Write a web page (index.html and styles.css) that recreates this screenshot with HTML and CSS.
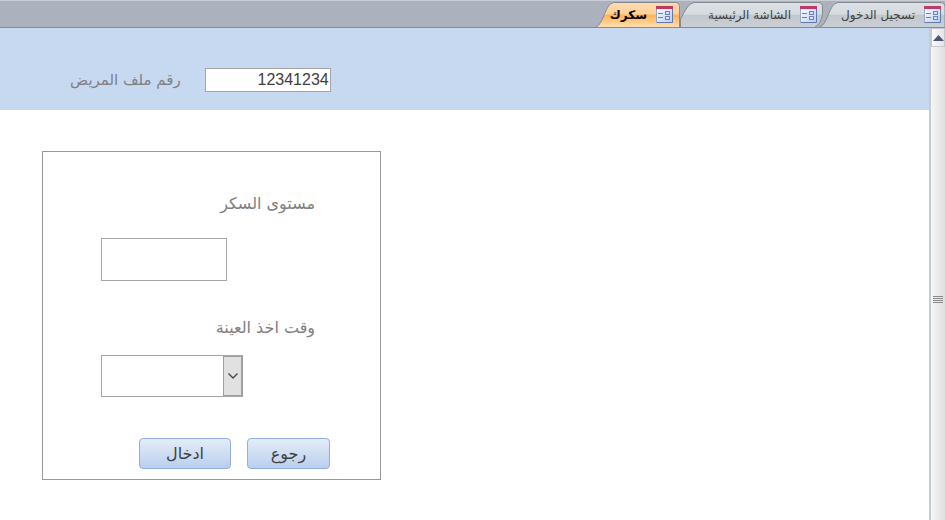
FILE: index.html
```
<!DOCTYPE html>
<html lang="ar" dir="rtl">
<head>
    <meta charset="utf-8">
    <title>سكرك</title>
    <link rel="stylesheet" href="styles.css">
</head>
<body>
    <!-- gradients and form icon shared by all tabs -->
    <svg class="defs" width="0" height="0" aria-hidden="true">
        <defs>
            <linearGradient id="tabGray" x1="0" y1="0" x2="0" y2="1">
                <stop offset="0" stop-color="#dde1e6"/>
                <stop offset="0.48" stop-color="#d5dade"/>
                <stop offset="0.52" stop-color="#c1c7cd"/>
                <stop offset="1" stop-color="#cbd0d6"/>
            </linearGradient>
            <linearGradient id="tabOrange" x1="0" y1="0" x2="0" y2="1">
                <stop offset="0" stop-color="#ffdcb0"/>
                <stop offset="0.45" stop-color="#ffd09a"/>
                <stop offset="0.52" stop-color="#ffb358"/>
                <stop offset="1" stop-color="#ffdfae"/>
            </linearGradient>
            <linearGradient id="iconBg" x1="0" y1="0" x2="1" y2="1">
                <stop offset="0" stop-color="#ffffff"/>
                <stop offset="1" stop-color="#b9cdee"/>
            </linearGradient>
            <symbol id="formIcon" viewBox="0 0 17 17">
                <rect x="0.5" y="1" width="16" height="15.5" fill="url(#iconBg)" stroke="#98a9cb"/>
                <rect x="0" y="0" width="17" height="3" fill="#bd3b66"/>
                <path d="M16.5 3v13.5H1" fill="none" stroke="#6079ae"/>
                <path d="M2 7.5h5M2 11.5h5" stroke="#7080aa"/>
                <rect x="9.5" y="5.5" width="4" height="3" fill="#d5e0f4" stroke="#6f84b8"/>
                <rect x="9.5" y="10.5" width="4" height="3" fill="#d5e0f4" stroke="#6f84b8"/>
            </symbol>
        </defs>
    </svg>

    <nav class="tabs">
        <a class="tab tab-first" href="#login">
            <svg class="tab-shape" viewBox="0 0 122 25" preserveAspectRatio="none"><path d="M-3 25C5 22 6 1 15 .5H117Q122 .5 122 5V25" fill="url(#tabGray)" stroke="#858b94"/></svg>
            <svg class="tab-icon"><use href="#formIcon"/></svg>
            <span>تسجيل الدخول</span>
        </a>
        <a class="tab tab-second" href="#home">
            <svg class="tab-shape" viewBox="0 0 143 25" preserveAspectRatio="none"><path d="M.5 25V17C5 9 8 1 15 .5H138Q142.500 .5 142.500 5V12Q141 22 135 25" fill="url(#tabGray)" stroke="#858b94"/></svg>
            <svg class="tab-icon"><use href="#formIcon"/></svg>
            <span>الشاشة الرئيسية</span>
        </a>
        <a class="tab tab-active" href="#sugar">
            <svg class="tab-shape" viewBox="0 0 84 25" preserveAspectRatio="none"><path d="M0 25C8 22 9 1 18 .5H79Q83.500 .5 83.500 5V25" fill="url(#tabOrange)" stroke="#858b94"/></svg>
            <svg class="tab-icon"><use href="#formIcon"/></svg>
            <span>سكرك</span>
        </a>
    </nav>

    <div class="window">
        <div class="scrollbar">
            <button class="scroll-up" type="button" aria-label="أعلى">
                <svg width="11" height="6" viewBox="0 0 11 6"><path d="M5.500 0L11 6H0z" fill="#4c5673"/></svg>
            </button>
            <div class="scroll-thumb">
                <svg width="10" height="8" viewBox="0 0 10 8"><path d="M0 .5h10M0 2.500h10M0 4.500h10M0 6.500h10" stroke="#8a8a8a"/></svg>
            </div>
        </div>

        <form class="form">
            <div class="file-row">
                <input class="box file-number" id="fileNumber" type="text" value="12341234" dir="ltr">
                <label for="fileNumber">رقم ملف المريض</label>
            </div>

            <div class="panel">
                <label class="field-label" for="sugarLevel">مستوى السكر</label>
                <input class="box sugar-level" id="sugarLevel" type="text">

                <label class="field-label" for="sampleTime">وقت اخذ العينة</label>
                <div class="combo">
                    <select class="box" id="sampleTime"><option></option></select>
                    <span class="combo-arrow">
                        <svg width="10" height="6" viewBox="0 0 10 6"><path d="M.5 .5L5 5L9.500 .5" fill="none" stroke="#444" stroke-width="1.300"/></svg>
                    </span>
                </div>

                <div class="buttons">
                    <button class="btn btn-back" type="button">رجوع</button>
                    <button class="btn btn-save" type="button">ادخال</button>
                </div>
            </div>
        </form>
    </div>
</body>
</html>
```

FILE: styles.css
```
* {
    box-sizing: border-box;
}

body {
    margin: 0;
    min-height: 100vh;
    display: flex;
    flex-direction: column;
    font-family: "DejaVu Sans", sans-serif;
    font-size: 15px;
    color: #808080;
    background: #fff;
}

.defs {
    position: absolute;
}

/* Tabs */
.tabs {
    display: flex;
    height: 28px;
    padding-top: 1px;
    background: #abb2bd;
    border-top: 1px solid #c9ced4;
    border-bottom: 1px solid #858b94;
}

.tab {
    position: relative;
    display: flex;
    align-items: center;
    gap: 9px;
    height: 25px;
    padding-right: 4px;
    font-size: 12px;
    color: #404040;
    text-decoration: none;
    white-space: nowrap;
}

.tab span,
.tab-icon {
    position: relative;
}

.tab-shape {
    position: absolute;
    top: 0;
    left: 0;
    width: 100%;
    height: 100%;
    overflow: visible;
}

.tab-icon {
    width: 17px;
    height: 17px;
}

.tab-first {
    width: 122px;
}

.tab-second {
    width: 143px;
    padding-right: 6px;
}

.tab-active {
    width: 84px;
    padding-right: 7px;
    font-weight: bold;
    color: #000;
}

/* Scrollbar */
.window {
    flex: 1;
    display: flex;
}

.scrollbar {
    width: 16px;
    display: flex;
    flex-direction: column;
    border-left: 2px solid #c5cbd2;
    background: #eee;
}

.scroll-up {
    height: 19px;
    padding: 0;
    border: 1px solid #c5c8cc;
    background: linear-gradient(to right, #fafafa, #e4e4e4);
    display: flex;
    align-items: center;
    justify-content: center;
}

.scroll-thumb {
    flex: 1;
    display: flex;
    align-items: center;
    justify-content: center;
    padding-top: 33px;
    background: linear-gradient(to right, #f6f6f6, #dedede);
}

/* Form */
.form {
    flex: 1;
    direction: ltr;
}

.file-row {
    display: flex;
    flex-direction: row-reverse;
    justify-content: flex-end;
    align-items: center;
    gap: 24px;
    height: 82px;
    padding: 22px 0 0 70px;
    background: #c7d9f1;
}

.file-row label {
    direction: rtl;
}

.box {
    border: 1px solid #a6a6a6;
    border-radius: 0;
    background: #fff;
    color: #404040;
    font-family: "Liberation Sans", sans-serif;
    font-size: 16px;
}

.file-number {
    width: 126px;
    height: 24px;
    padding: 0 1px;
    text-align: right;
}

.panel {
    width: 339px;
    margin: 41px 0 40px 42px;
    padding: 40px 50px 10px 58px;
    border: 1px solid #999;
}

.field-label {
    display: block;
    direction: rtl;
    height: 24px;
    padding-right: 15px;
    font-size: 16px;
    line-height: 24px;
}

.sugar-level {
    display: block;
    width: 126px;
    height: 43px;
    margin: 22px 0 35px;
}

.combo {
    position: relative;
    width: 142px;
    height: 42px;
    margin: 15px 0 41px;
}

.combo select {
    width: 100%;
    height: 100%;
    appearance: none;
}

.combo-arrow {
    position: absolute;
    top: 1px;
    right: 0;
    bottom: 1px;
    width: 20px;
    display: flex;
    align-items: center;
    justify-content: center;
    border: 1px solid #a0a0a0;
    border-right-width: 2px;
    background: #e1e1e1;
    pointer-events: none;
}

/* Buttons */
.buttons {
    display: flex;
    direction: rtl;
    gap: 16px;
}

.btn {
    height: 31px;
    padding: 0;
    border: 1px solid #8fb0dc;
    border-radius: 4px;
    background: linear-gradient(#e4ecf9, #b9cfee);
    color: #404040;
    font-family: inherit;
    font-size: 16px;
}

.btn-back {
    width: 83px;
}

.btn-save {
    width: 92px;
}
```
